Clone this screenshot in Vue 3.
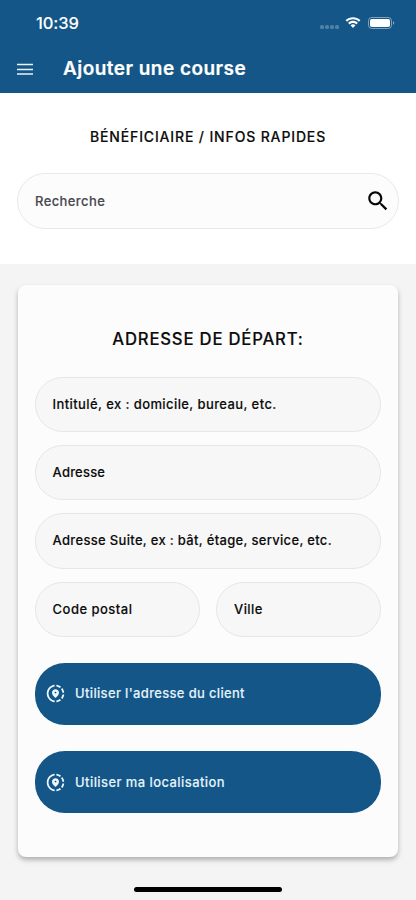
<script setup>
const fields = [
  { text: 'Intitulé, ex : domicile, bureau, etc.', cls: 'title-field' },
  { text: 'Adresse', cls: 'address' },
  { text: 'Adresse Suite, ex : bât, étage, service, etc.', cls: 'suite' },
  { text: 'Code postal', cls: 'half postal' },
  { text: 'Ville', cls: 'half city' },
]
const actions = [
  { text: "Utiliser l'adresse du client", cls: 'client' },
  { text: 'Utiliser ma localisation', cls: 'locate' },
]
</script>

<template>
  <div class="screen">
    <header>
      <div class="status">
        <span class="time">10:39</span>
        <div class="indicators">
          <div class="dots"><i v-for="n in 4" :key="n"></i></div>
          <svg class="wifi" viewBox="0 0 16 12">
            <path d="M8 2.3c2.2 0 4.2.85 5.7 2.25.1.1.3.1.4 0l1.1-1.1c.12-.12.12-.32 0-.44C11.2-.8 4.8-.8.8 3.01c-.12.12-.12.32 0 .44l1.1 1.1c.1.1.3.1.4 0C3.8 3.15 5.8 2.3 8 2.3zm0 3.65c1.2 0 2.35.45 3.23 1.25.12.11.3.11.42 0l1.1-1.12c.12-.12.12-.32 0-.43-2.67-2.5-6.8-2.5-9.5 0-.12.11-.12.31 0 .43l1.1 1.12c.12.11.3.11.42 0C5.65 6.4 6.8 5.95 8 5.95zm2.3 2.65c.12-.12.11-.32-.02-.43-1.3-1.1-3.25-1.1-4.55 0-.13.11-.14.31-.02.43l2.08 2.1c.12.12.32.12.44 0z" />
          </svg>
          <svg class="battery" viewBox="0 0 27 12">
            <rect x=".5" y=".5" width="23" height="11" rx="3.2" fill="none" stroke="#fff" stroke-opacity=".45" />
            <rect x="2" y="2" width="20" height="8" rx="1.8" />
            <path d="M25 4.2v3.6c.7-.3 1.2-1 1.2-1.8s-.5-1.5-1.2-1.8z" opacity=".5" />
          </svg>
        </div>
      </div>
      <div class="toolbar">
        <svg class="menu" viewBox="0 0 16 12">
          <path d="M0 1.5h16M0 6.5h16M0 11h16" />
        </svg>
        <h1>Ajouter une course</h1>
      </div>
    </header>

    <section class="quick">
      <h2>BÉNÉFICIAIRE / INFOS RAPIDES</h2>
      <div class="search">
        <span>Recherche</span>
        <svg viewBox="0 0 24 24">
          <path d="M15.5 14h-.79l-.28-.27C15.41 12.59 16 11.11 16 9.5 16 5.91 13.09 3 9.5 3S3 5.91 3 9.5 5.91 16 9.5 16c1.61 0 3.09-.59 4.23-1.57l.27.28v.79l5 4.99L20.49 19l-4.99-5zm-6 0C7.01 14 5 11.99 5 9.5S7.01 5 9.5 5 14 7.01 14 9.5 11.99 14 9.5 14z" />
        </svg>
      </div>
    </section>

    <main class="card">
      <h2>ADRESSE DE DÉPART:</h2>
      <div class="fields">
        <div v-for="f in fields" :key="f.text" class="field" :class="f.cls"><span>{{ f.text }}</span></div>
      </div>
      <div class="actions">
        <button v-for="a in actions" :key="a.text" :class="a.cls">
          <svg viewBox="0 0 24 24">
            <path d="M13.02 19.93v2.02c2.01-.2 3.84-1 5.32-2.21l-1.42-1.43c-1.11.86-2.44 1.44-3.9 1.62zM4.03 12c0-4.05 3.03-7.41 6.95-7.93V2.05C5.95 2.58 2.03 6.84 2.03 12c0 5.16 3.92 9.42 8.95 9.95v-2.02c-3.92-.52-6.95-3.88-6.95-7.93zM19.95 11h2.02c-.2-2.01-1-3.84-2.21-5.32l-1.43 1.43c.86 1.1 1.44 2.43 1.62 3.89zM18.34 4.26c-1.48-1.21-3.32-2.01-5.32-2.21v2.02c1.46.18 2.79.76 3.9 1.62l1.42-1.43zM18.33 16.9l1.43 1.42c1.21-1.48 2.01-3.31 2.21-5.32h-2.02c-.18 1.46-.76 2.79-1.62 3.9zM16 11.1C16 8.61 14.1 7 12 7s-4 1.61-4 4.1c0 1.66 1.33 3.63 4 5.9 2.67-2.27 4-4.24 4-5.9zm-4 .9c-.59 0-1.07-.48-1.07-1.07s.48-1.07 1.07-1.07 1.07.48 1.07 1.07S12.59 12 12 12z" />
          </svg>
          <span>{{ a.text }}</span>
        </button>
      </div>
    </main>

    <footer><div class="home"></div></footer>
  </div>
</template>

<style>
body { margin: 0; background: #f4f4f4; }
</style>

<style scoped>
* { box-sizing: border-box; }
h1, h2 { margin: 0; }
.screen {
  width: 416px;
  height: 900px;
  overflow: hidden;
  display: flex;
  flex-direction: column;
  background: #f4f4f4;
  color: #0c0c0c;
  font-family: Inter, "Liberation Sans", sans-serif;
}
header { height: 93px; background: #135687; color: #fff; flex: none; }
.status { height: 46px; padding: 0 21px 0 36px; display: flex; justify-content: space-between; align-items: center; }
.time { font-size: 16.5px; font-weight: 500; line-height: 20px; letter-spacing: -0.1px; -webkit-text-stroke: 0.1px; }
.indicators { display: flex; align-items: center; }
.dots { display: flex; gap: 1.2px; margin: 8px 6.5px 0 0; }
.dots i { width: 3.8px; height: 3.8px; border-radius: 1.5px; background: #4e81a7; }
.wifi { width: 16px; height: 12px; fill: #fff; margin-right: 7px; }
.battery { width: 27px; height: 12px; fill: #fff; }
.toolbar { height: 45px; padding-left: 17px; display: flex; align-items: center; }
.menu { width: 16px; height: 12px; margin-right: 30px; stroke: #e8f4fb; stroke-width: 1.6; fill: none; }
h1 { margin-top: 1px; font-size: 19px; font-weight: 600; line-height: 24px; letter-spacing: 0.46px; white-space: nowrap; -webkit-text-stroke: 0.2px; }
.quick { height: 170.5px; padding: 33px 17px 0; background: #fff; flex: none; }
.quick h2 { font-size: 14px; font-weight: 500; line-height: 22px; letter-spacing: 0.85px; text-align: center; white-space: nowrap; -webkit-text-stroke: 0.15px; }
.search {
  margin-top: 25px;
  height: 56px;
  padding: 0 7.5px 0 17px;
  display: flex;
  justify-content: space-between;
  align-items: center;
  background: #fcfcfc;
  border: 1px solid #e8e8e8;
  border-radius: 29px;
}
.search span { font-size: 13px; font-weight: 500; letter-spacing: 0.4px; color: #494950; -webkit-text-stroke: 0.15px; }
.search svg { width: 26px; height: 26px; fill: #080808; }
.card {
  margin: 21px 17.7px 0;
  height: 572px;
  padding: 42px 16.9px 0;
  background: #fcfcfc;
  border-radius: 8px;
  box-shadow: 0 3px 5px rgba(0, 0, 0, 0.28);
  flex: none;
}
.card h2 { font-size: 16.7px; font-weight: 500; line-height: 24px; letter-spacing: 0.8px; text-align: center; white-space: nowrap; -webkit-text-stroke: 0.15px; }
.fields { margin-top: 26px; display: grid; grid-template-columns: 1fr 1fr; grid-auto-rows: 55.3px; gap: 13.1px 16px; }
.field {
  grid-column: span 2;
  padding-left: 17px;
  display: flex;
  align-items: center;
  background: #f7f7f7;
  border: 1px solid #e6e6e6;
  border-radius: 28px;
  font-size: 13px;
  font-weight: 500;
  letter-spacing: 0.41px;
  white-space: nowrap;
  -webkit-text-stroke: 0.12px;
}
.field span { margin-top: -1px; }
.suite { letter-spacing: 0.32px; }
.address { letter-spacing: 0.2px; }
.postal { letter-spacing: 0.48px; }
.half { grid-column: span 1; }
.actions { margin-top: 25.6px; display: flex; flex-direction: column; gap: 26px; }
.actions button {
  height: 62.3px;
  padding: 0 0 0 10.5px;
  display: flex;
  align-items: center;
  gap: 9px;
  border: 0;
  border-radius: 30px;
  background: #135687;
  color: #e4f3fb;
  font: 500 13px Inter, "Liberation Sans", sans-serif;
  letter-spacing: 0.42px;
  white-space: nowrap;
  -webkit-text-stroke: 0.1px;
}
.actions .client { letter-spacing: 0.33px; }
.actions span { margin-top: -1px; }
.actions svg { width: 21px; height: 21px; fill: #eef9ff; }
footer { flex: 1; display: flex; justify-content: center; align-items: flex-end; padding-bottom: 8.5px; }
.home { width: 148px; height: 5px; border-radius: 3px; background: #000; }
</style>
